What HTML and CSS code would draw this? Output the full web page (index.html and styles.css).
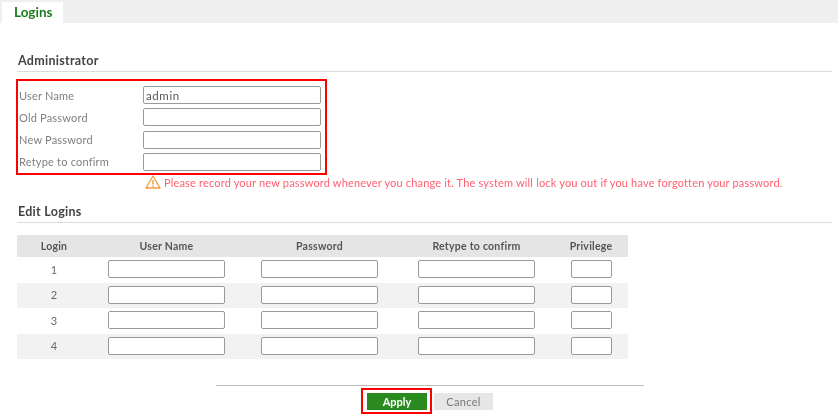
FILE: index.html
```html
<!DOCTYPE html>
<html lang="en">
<head>
<meta charset="utf-8">
<title>Logins</title>
<link rel="stylesheet" href="styles.css">
</head>
<body>
<div class="tabs"><div class="tab">Logins</div></div>
<main class="content">
  <h2 class="section-title admin-title">Administrator</h2>
  <div class="highlight admin-box">
    <div class="field"><label>User Name</label><input class="field-input" type="text" value="admin"></div>
    <div class="field"><label>Old Password</label><input class="field-input" type="text"></div>
    <div class="field"><label>New Password</label><input class="field-input" type="text"></div>
    <div class="field"><label>Retype to confirm</label><input class="field-input" type="text"></div>
  </div>
  <div class="warning">
    <svg class="warn-icon" viewBox="0 0 16 14" width="16" height="14" aria-hidden="true">
      <path d="M8 1 L15 13 H1 Z" fill="none" stroke="#f39a3c" stroke-width="1.3" stroke-linejoin="round"/>
      <path d="M8 5 V9.6 M8 10.6 V12" fill="none" stroke="#f39a3c" stroke-width="1.4"/>
    </svg>
    <span>Please record your new password whenever you change it. The system will lock you out if you have forgotten your password.</span>
  </div>
  <h2 class="section-title edit-title">Edit Logins</h2>
  <table class="logins">
    <thead>
      <tr><th class="c-login">Login</th><th class="c-user">User Name</th><th class="c-pass">Password</th><th class="c-retype">Retype to confirm</th><th class="c-priv">Privilege</th></tr>
    </thead>
    <tbody>
      <tr><td>1</td><td><input class="in-wide" type="text"></td><td><input class="in-wide" type="text"></td><td><input class="in-wide" type="text"></td><td><input class="in-small" type="text"></td></tr>
      <tr><td>2</td><td><input class="in-wide" type="text"></td><td><input class="in-wide" type="text"></td><td><input class="in-wide" type="text"></td><td><input class="in-small" type="text"></td></tr>
      <tr><td>3</td><td><input class="in-wide" type="text"></td><td><input class="in-wide" type="text"></td><td><input class="in-wide" type="text"></td><td><input class="in-small" type="text"></td></tr>
      <tr><td>4</td><td><input class="in-wide" type="text"></td><td><input class="in-wide" type="text"></td><td><input class="in-wide" type="text"></td><td><input class="in-small" type="text"></td></tr>
    </tbody>
  </table>
  <div class="footer">
    <div class="buttons">
      <div class="highlight apply-box"><button class="btn btn-apply" type="button">Apply</button></div>
      <button class="btn btn-cancel" type="button">Cancel</button>
    </div>
  </div>
</main>
</body>
</html>
```
FILE: styles.css
```css
* { box-sizing: border-box; }
html, body { margin: 0; padding: 0; background: #fff; }
body {
  width: 838px;
  height: 418px;
  overflow: hidden;
  font-family: "Lato", "Liberation Sans", sans-serif;
  font-size: 11px;
  color: #6a6a6a;
  filter: blur(0.3px);
}
.tabs {
  height: 23px;
  background: #efefef;
  padding: 2px 0 0 2px;
}
.tab {
  width: 61px;
  height: 21px;
  background: #fff;
  color: #1f7a1f;
  font-size: 13.5px;
  font-weight: 700;
  line-height: 20px;
  padding-left: 12px;
}
.content { padding: 0 6px 0 17px; }
.section-title {
  margin: 0;
  height: 21px;
  color: #444;
  font-size: 12.5px;
  font-weight: 700;
  letter-spacing: 0.28px;
  line-height: 20px;
  border-bottom: 1px solid #dcdcdc;
  padding-left: 1px;
}
.admin-title { margin-top: 28px; }
.highlight { border: 2px solid #f00; }
.admin-box {
  margin-top: 7px;
  margin-left: -1px;
  width: 311px;
  height: 96px;
  padding: 5px 0 0 1px;
  display: flex;
  flex-direction: column;
  gap: 4.3px;
}
.field { display: flex; align-items: center; height: 18px; }
.field label { width: 124px; letter-spacing: 0.2px; color: #808080; }
input {
  display: block;
  height: 18px;
  border: 1px solid #9a9a9a;
  border-radius: 2px;
  background: #fff;
  padding: 0 2px;
  margin: 0;
  font: inherit;
  color: #555;
}
.field-input { width: 178px; letter-spacing: 0.6px; font-size: 11.5px; }
.warning {
  margin: 0 0 0 128px;
  height: 14px;
  display: flex;
  align-items: center;
  gap: 3px;
  color: #ff6070;
  letter-spacing: 0.17px;
  white-space: nowrap;
}
.warn-icon { flex: none; }
.edit-title { margin-top: 13px; }
.logins {
  margin-top: 12px;
  width: 611px;
  border-collapse: collapse;
  table-layout: fixed;
}
.logins th {
  height: 22px;
  background: #e5e5e5;
  color: #555;
  font-weight: 700;
  font-size: 10.5px;
  letter-spacing: 0.25px;
  text-align: center;
  padding: 0;
}
.logins td {
  height: 25.5px;
  padding: 0 0 1px;
  text-align: center;
  color: #6a6a6a;
}
.logins th:last-child { padding-right: 2px; }
.logins td:last-child { padding-right: 2px; }
.logins tbody tr:nth-child(even) td { background: #f2f2f2; }
.c-login { width: 74px; }
.c-user { width: 151px; }
.c-pass { width: 155px; }
.c-retype { width: 159px; }
.c-priv { width: 72px; }
.logins input { margin: 0 auto; }
.in-wide { width: 117px; }
.in-small { width: 41px; }
.footer {
  margin: 26px 0 0 199px;
  width: 428px;
  border-top: 1px solid #bdbdbd;
  padding-top: 2px;
}
.buttons { display: flex; align-items: center; margin-left: 145px; }
.apply-box {
  width: 71px;
  height: 26px;
  padding: 3px 0 0 4px;
}
.btn {
  height: 17px;
  border: 0;
  padding: 0;
  font: inherit;
  font-size: 11px;
  line-height: 17px;
  display: block;
}
.btn-apply {
  width: 60px;
  background: #2b8a1f;
  color: #fff;
  font-weight: 700;
}
.btn-cancel {
  width: 59px;
  margin-left: 2px;
  background: #e6e6e6;
  color: #777;
  letter-spacing: 0.3px;
}
```
